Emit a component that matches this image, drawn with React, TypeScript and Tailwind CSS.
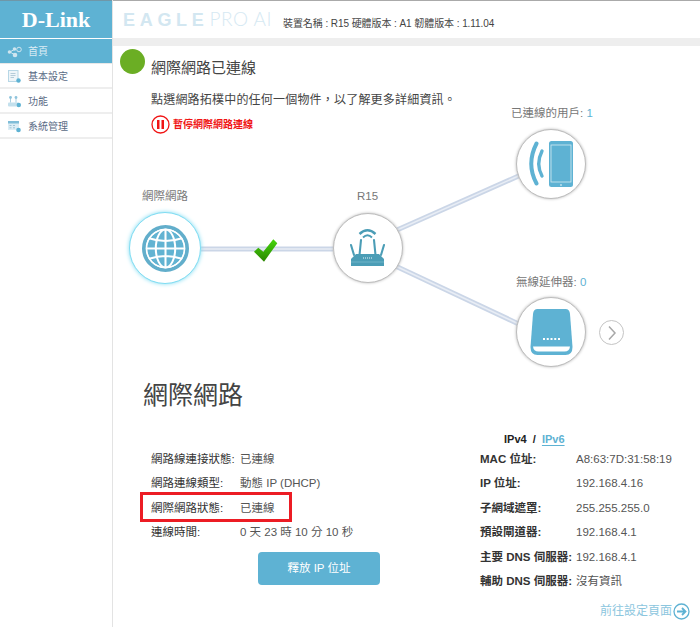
const font = "font-['Liberation_Sans','Noto_Sans_CJK_TC',sans-serif]";

const menu = [
  { label: "首頁", icon: "home", active: true },
  { label: "基本設定", icon: "settings" },
  { label: "功能", icon: "features" },
  { label: "系統管理", icon: "system" },
];

const leftRows = [
  ["網路線連接狀態:", "已連線"],
  ["網路連線類型:", "動態 IP (DHCP)"],
  ["網際網路狀態:", "已連線"],
  ["連線時間:", "0 天 23 時 10 分 10 秒"],
];

const rightRows = [
  ["MAC 位址:", "A8:63:7D:31:58:19"],
  ["IP 位址:", "192.168.4.16"],
  ["子網域遮罩:", "255.255.255.0"],
  ["預設閘道器:", "192.168.4.1"],
  ["主要 DNS 伺服器:", "192.168.4.1"],
  ["輔助 DNS 伺服器:", "沒有資訊"],
];

const MenuIcon = ({ name }: { name: string }) => {
  if (name === "home") {
    return (
      <svg width="15" height="12" viewBox="0 0 15 12">
        <circle cx="2.500" cy="6" r="1.800" fill="#cfe5ef" />
        <circle cx="7.500" cy="3" r="1.800" fill="#cfe5ef" />
        <circle cx="12" cy="3.500" r="2.300" fill="none" stroke="#cfe5ef" />
        <circle cx="8" cy="9" r="2.300" fill="#cfe5ef" />
        <path d="M3 6 L8 3 M3 6 L8 9" stroke="#cfe5ef" />
      </svg>
    );
  }
  if (name === "settings") {
    return (
      <svg width="13" height="13" viewBox="0 0 13 13">
        <rect x="0.500" y="0.500" width="9.500" height="11" fill="#eef5f9" stroke="#b7d7e6" />
        <path d="M2.500 3.500h5M2.500 5.500h5M2.500 7.500h3.500" stroke="#b5ccd9" />
        <circle cx="10.500" cy="10.500" r="2.200" fill="#5eb2d3" />
      </svg>
    );
  }
  if (name === "features") {
    return (
      <svg width="13" height="13" viewBox="0 0 13 13">
        <rect x="0" y="7.500" width="11" height="4" rx="1" fill="#c3e0ed" />
        <path d="M2.500 7.500V3M8 7.500V3" stroke="#a9cfe2" />
        <circle cx="2.500" cy="2.500" r="1.400" fill="#8fc4dc" />
        <circle cx="8" cy="2.500" r="1.400" fill="#8fc4dc" />
        <circle cx="10.800" cy="10" r="2.200" fill="#5eb2d3" />
      </svg>
    );
  }
  return (
    <svg width="13" height="13" viewBox="0 0 13 13">
      <rect x="0" y="1" width="11" height="9" fill="#dcedf5" />
      <rect x="0" y="1" width="11" height="2.500" fill="#7fbdd8" />
      <path d="M1.500 5.500h2M5 5.500h2M1.500 7.800h2M5 7.800h2" stroke="#9cc3d6" />
      <circle cx="10.500" cy="10" r="2.300" fill="#5eb2d3" />
    </svg>
  );
};

const GlobeIcon = () => (
  <svg width="47" height="47" viewBox="0 0 46 46" fill="none">
    <circle cx="23" cy="23" r="21.200" stroke="#62aecb" stroke-width="3.600" />
    <circle cx="23" cy="23" r="18" fill="#62b3d2" />
    <ellipse cx="23" cy="23" rx="9.500" ry="18.500" stroke="#fff" stroke-width="2" />
    <path d="M23 4v38M4 23h38M7 13 Q23 18.500 39 13M7 33 Q23 27.500 39 33" stroke="#fff" stroke-width="2" />
    <circle cx="23" cy="23" r="18.600" stroke="#fff" stroke-width="1.300" />
  </svg>
);

const RouterIcon = () => (
  <svg width="40" height="42" viewBox="8 5 40 42" fill="none">
    <path d="M19.500 12 Q27.500 4.500 35.500 12" stroke="#4b9db6" stroke-width="2.400" />
    <path d="M23 15.500 Q27.500 11 32 15.500" stroke="#4b9db6" stroke-width="1.900" />
    <path d="M11 23L14 33M44 23L41 33M21 18L19.500 33M34 18L35.500 33" stroke="#4b9db6" stroke-width="2.100" stroke-linecap="round" />
    <path d="M16 32H39L44 37V44H11V37Z" fill="#4b9db6" />
    <path d="M11 40H44" stroke="#7fbdd0" stroke-width="0.700" />
    <path d="M23 36h9" stroke="#e8f4f8" stroke-width="1" stroke-dasharray="1 1" />
  </svg>
);

const PhoneIcon = () => (
  <svg width="46" height="46" viewBox="0 0 46 46" fill="none">
    <path d="M8.500 2.500 Q-2 23 8.500 42.500" stroke="#5eb2d3" stroke-width="4" stroke-linecap="round" />
    <path d="M14 10 Q7.500 23 14 35" stroke="#5eb2d3" stroke-width="3.400" stroke-linecap="round" />
    <rect x="21" y="0" width="24" height="46" rx="2.500" fill="#5eb2d3" />
    <rect x="23" y="4" width="20" height="37" stroke="#d4eaf3" stroke-width="0.800" />
    <circle cx="33" cy="44" r="0.800" fill="#fff" />
  </svg>
);

const ExtenderIcon = () => (
  <svg width="43" height="46" viewBox="0 0 42 46" fill="none">
    <path d="M7 0 H35 Q39 0 39.500 5 L42 38 Q42 46 35 46 H7 Q0 46 0 38 L2.500 5 Q3 0 7 0 Z" fill="#5eb2d3" />
    <path d="M2.500 37.500 H39.500 Q39 42.500 34 42.500 H8 Q3 42.500 2.500 37.500 Z" fill="#fff" />
    <path d="M12.500 30h17" stroke="#fff" stroke-width="2" stroke-dasharray="2 1.750" />
  </svg>
);

const Node = ({ x, y, glow, children }: { x: number; y: number; glow?: boolean; children: React.ReactNode }) => (
  <div
    className={`absolute flex -translate-x-1/2 -translate-y-1/2 items-center justify-center rounded-full border bg-white ${
      glow ? "h-[72px] w-[72px] border-[#7fdcf2] shadow-[0_0_4px_#7fdcf2]" : "h-[70px] w-[70px] border-[#bdbdbd] shadow-[0_0_3px_#b5b5b5]"
    }`}
    style={{ left: x, top: y }}
  >
    {children}
  </div>
);

export default function App() {
  return (
    <div className={`${font} flex h-[627px] w-[700px] overflow-hidden bg-white text-[#444]`}>
      <aside className="w-[113px] shrink-0 border-r border-[#e3e3e3]">
        <div className="flex h-[38px] items-center justify-center border-t border-t-[#6f97a8] bg-[#5eb2d3]">
          <span className="font-['Liberation_Serif',serif] text-[22px] font-bold leading-none text-white">D-Link</span>
        </div>
        {menu.map((m) => (
          <div
            key={m.label}
            className={`flex h-[25px] items-center gap-[6px] pl-[7px] text-[10px] ${
              m.active
                ? "mt-[1px] border-b border-[#e8e8e8] bg-[#5eb2d3] pt-[1px] text-[#dcedf5]"
                : "border-b-2 border-[#eeeeee] pt-[2px] text-[#5a6b85]"
            }`}
          >
            <span className="flex w-[15px] justify-center">
              <MenuIcon name={m.icon} />
            </span>
            {m.label}
          </div>
        ))}
      </aside>

      <main className="min-w-0 flex-1">
        <header className="flex h-[38px] items-center gap-[11px] border-t border-t-[#aaaaaa] pl-[10px]">
          <div className="flex items-baseline gap-[1px] text-[#d3e7f1]">
            <span className="text-[18px] font-bold tracking-[4.700px]">EAGLE</span>
            <span className="font-['Lato',sans-serif] text-[19px] font-light tracking-[0.500px] text-[#d6e9f3]">PRO AI</span>
          </div>
          <span className="mt-[7px] text-[10px] tracking-[-0.070px] text-[#444]">裝置名稱 : R15 硬體版本 : A1 韌體版本 : 1.11.04</span>
        </header>
        <div className="h-[8px] bg-[#eeeeee]" />

        <section className="relative h-[322px]">
          <div className="absolute left-[7px] top-[3px] h-[25px] w-[25px] rounded-full bg-[#6bae24]" />
          <h1 className="pl-[38px] pt-[11px] text-[15px] font-normal leading-[22px] text-[#444]">網際網路已連線</h1>
          <p className="pl-[38px] pt-[12px] text-[12px] leading-[18px] tracking-[0.200px] text-[#444]">
            點選網路拓樸中的任何一個物件，以了解更多詳細資訊。
          </p>
          <div className="flex items-center gap-[3px] pl-[38px] pt-[6px]">
            <svg width="19" height="19" viewBox="0 0 19 19" fill="none">
              <circle cx="9.500" cy="9.500" r="8.500" stroke="#f01414" stroke-width="1.300" />
              <path d="M6 5h2.500v9H6zM10.500 5H13v9h-2.500z" fill="#f01414" />
            </svg>
            <span className="text-[10px] font-bold text-[#f01414]">暫停網際網路連線</span>
          </div>

          {/* topology is a free canvas, coordinates relative to this section */}
          <svg className="absolute left-0 top-0" width="587" height="322" fill="none">
            <defs>
              <linearGradient id="check" x1="0" y1="0" x2="0" y2="1">
                <stop offset="0" stop-color="#46d60c" />
                <stop offset="1" stop-color="#2a8500" />
              </linearGradient>
            </defs>
            <g stroke="#cbd6e7" stroke-width="5">
              <path d="M88 203H220" />
              <path d="M275 188L410 128" />
              <path d="M275 216.500L410 280" />
            </g>
            <g stroke="#e8edf5" stroke-width="1.500">
              <path d="M88 203H220" />
              <path d="M275 188L410 128" />
              <path d="M275 216.500L410 280" />
            </g>
            <path d="M141 205.700L151 215.700L164.300 197.300L160.300 193.300L150.300 205.700L145.300 201.700Z" fill="url(#check)" />
          </svg>

          <span className="absolute left-[29px] top-[142px] text-[11.500px] text-[#777]">網際網路</span>
          <span className="absolute left-[244px] top-[142px] text-[11.500px] text-[#777]">R15</span>
          <span className="absolute left-[398px] top-[59px] text-[11.500px] text-[#777]">
            已連線的用戶: <span className="text-[#5eb2d3]">1</span>
          </span>
          <span className="absolute left-[403px] top-[228px] text-[11.500px] text-[#777]">
            無線延伸器: <span className="text-[#5eb2d3]">0</span>
          </span>

          <Node x={52} y={202} glow>
            <GlobeIcon />
          </Node>
          <Node x={255} y={202}>
            <RouterIcon />
          </Node>
          <Node x={438} y={118}>
            <PhoneIcon />
          </Node>
          <Node x={438} y={286}>
            <ExtenderIcon />
          </Node>

          <button className="absolute left-[486px] top-[274px] flex h-[25px] w-[25px] items-center justify-center rounded-full border border-[#c4c4c4] bg-white">
            <svg width="10" height="16" viewBox="0 0 10 16" fill="none">
              <path d="M2 1.500L8 8L2 14.500" stroke="#a8a8a8" stroke-width="1.500" />
            </svg>
          </button>
        </section>

        <section className="flex">
          <div className="w-[353px] shrink-0 pl-[30px]">
            <h2 className="h-[73px] pt-[9px] text-[25px] font-normal leading-[36px] text-[#444]">網際網路</h2>
            <div className="relative pl-[8px] pt-[6px] text-[11.500px]">
              {leftRows.map(([label, value]) => (
                <div key={label} className="flex h-[24.500px] items-center">
                  <span className="w-[89px] shrink-0 text-[#333]">{label}</span>
                  <span className="text-[#555]">{value}</span>
                </div>
              ))}
              <div className="absolute left-[-3px] top-[51px] h-[30px] w-[152px] border-[3px] border-[#ec1c24]" />
            </div>
            <button className="ml-[115px] mt-[7px] h-[33px] w-[122px] rounded-[4px] bg-[#5eb2d3] text-[11.500px] text-white">
              釋放 IP 位址
            </button>
          </div>
          <div className="min-w-0 flex-1 pl-[14px]">
            <div className="h-[79px] pl-[24px] pt-[63px] text-[11px] font-bold leading-[16px] text-[#222]">
              IPv4 &nbsp;/&nbsp; <span className="text-[#5eb2d3] underline underline-offset-2">IPv6</span>
            </div>
            <div className="text-[11.500px]">
              {rightRows.map(([label, value]) => (
                <div key={label} className="flex h-[24.500px] items-center">
                  <span className="w-[96px] shrink-0 whitespace-nowrap font-bold text-[#333]">{label}</span>
                  <span className="whitespace-nowrap text-[#555]">{value}</span>
                </div>
              ))}
            </div>
            <div className="flex items-center justify-end gap-[1px] pr-[10px] pt-[8px] text-[12px] text-[#8cc6de]">
              前往設定頁面
              <svg width="17" height="17" viewBox="0 0 17 17" fill="none">
                <circle cx="8.500" cy="8.500" r="7.500" stroke="#5eb2d3" stroke-width="1.300" />
                <path d="M4 8.500h8M9 5l3.500 3.500L9 12" stroke="#5eb2d3" stroke-width="1.800" />
              </svg>
            </div>
          </div>
        </section>
      </main>
    </div>
  );
}
